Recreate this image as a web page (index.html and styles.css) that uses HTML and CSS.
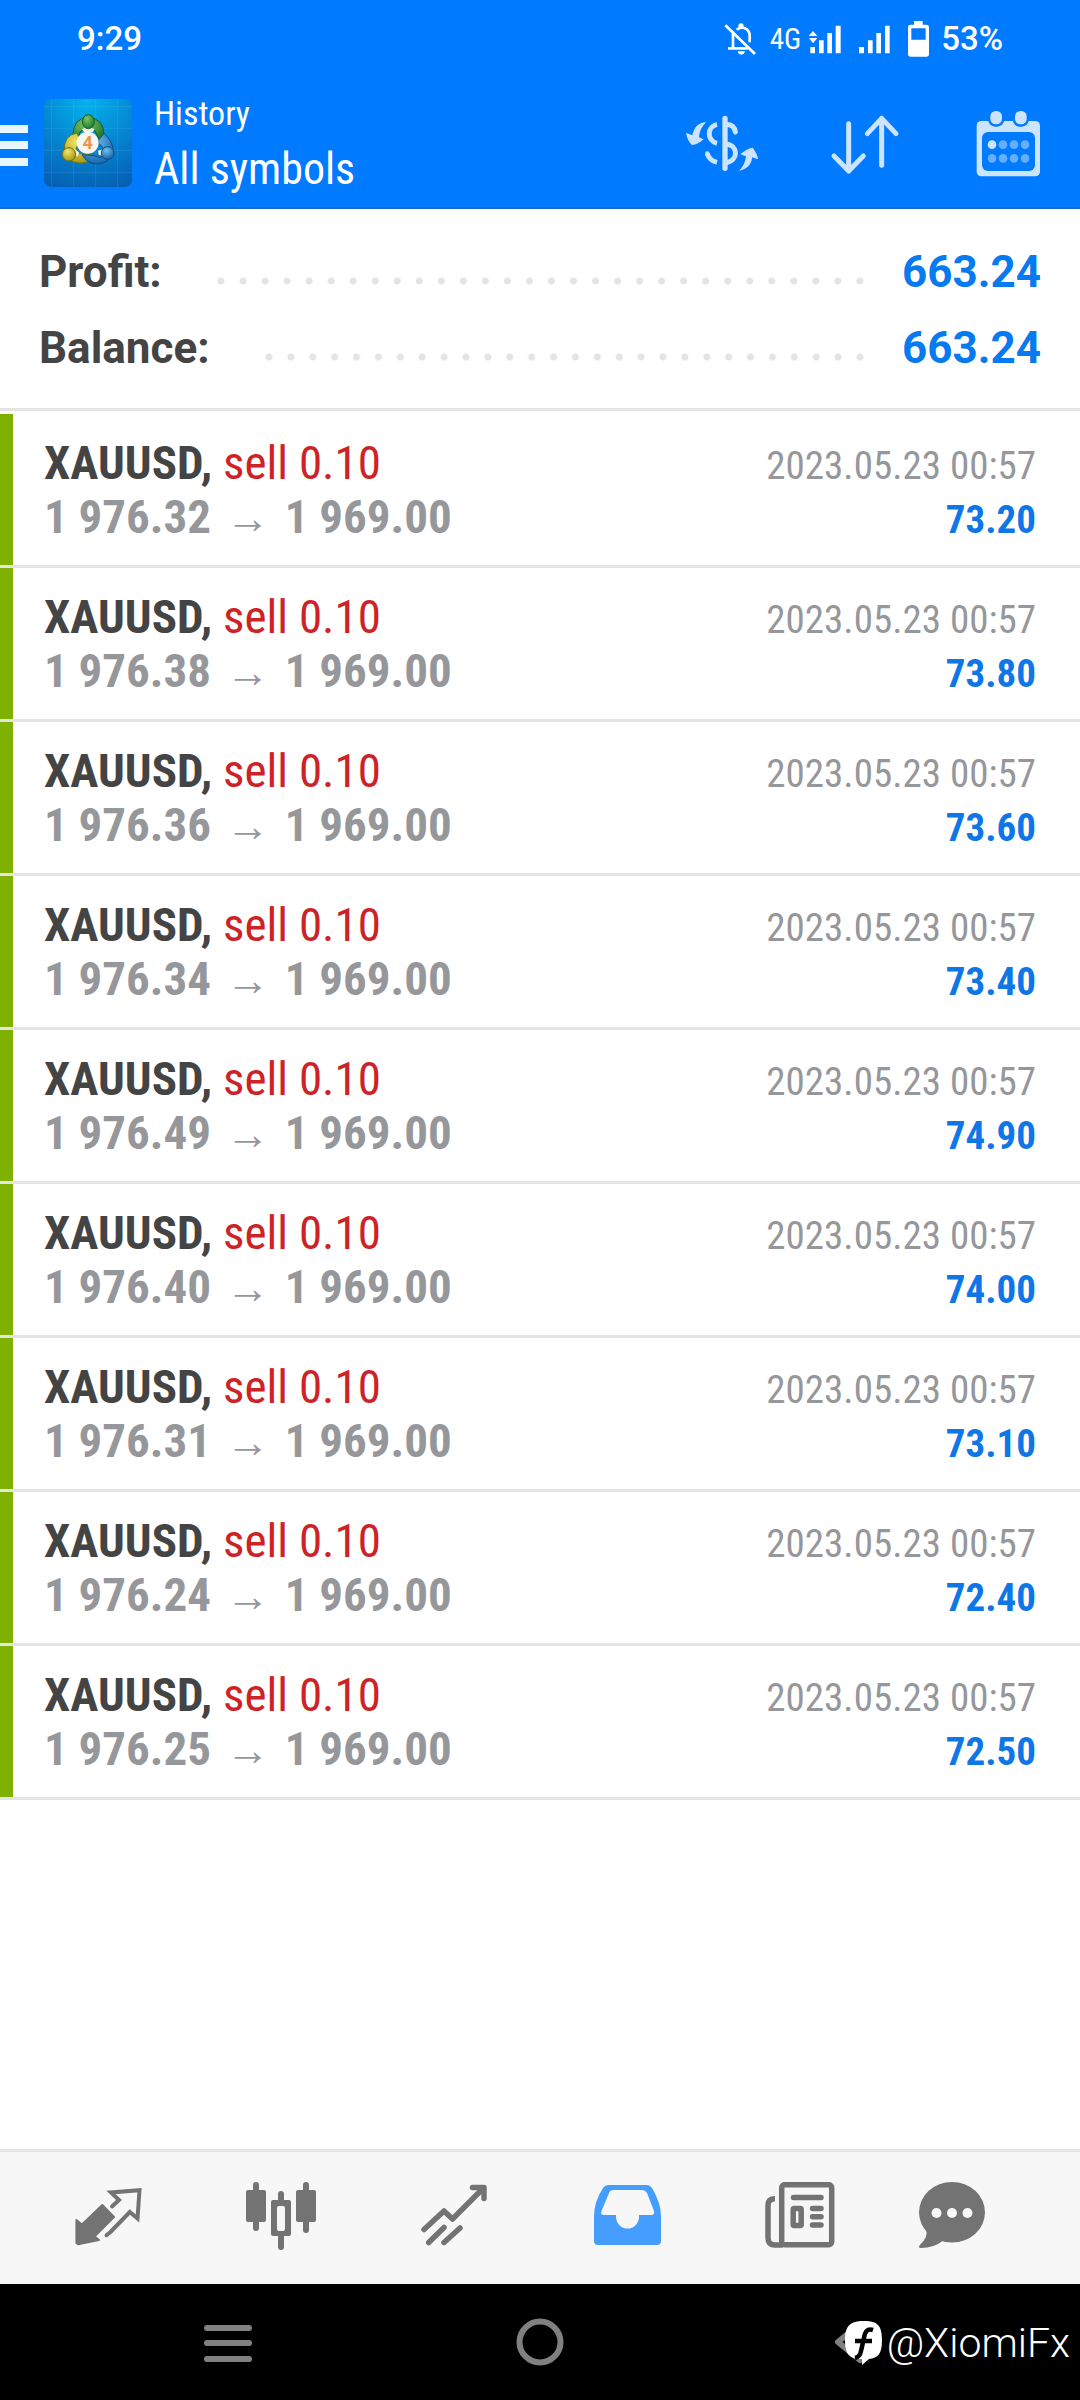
FILE: index.html
```html
<!DOCTYPE html>
<html lang="en">
<head>
<meta charset="utf-8">
<meta name="viewport" content="width=device-width, initial-scale=1">
<title>History</title>
<link rel="stylesheet" href="styles.css">
</head>
<body>
<header class="top">
  <div class="status">
    <span class="clock">9:29</span>
    <svg class="bell" viewBox="195 66 96 96" width="32" height="32" fill="none" stroke="#fff" stroke-width="8" aria-hidden="true">
      <path d="M199 73L288 159"/><path d="M222 92V142M207 142H266M233 86Q243 78 256 81Q272 87 272 104V124"/>
      <circle cx="246" cy="75" r="8" fill="#fff" stroke="none"/><path d="M236 151H258Q256 161 247 161Q238 161 236 151Z" fill="#fff" stroke="none"/>
    </svg>
    <span class="net">4G</span>
    <svg class="signal" viewBox="450 66 96 96" width="32" height="32" fill="#fff" aria-hidden="true">
      <path d="M454 138h14v19h-14zM480 118h14v39h-14zM505 96h14v61h-14zM530 74h15v83h-15zM462 90l13 15h-26zM450 111h25l-13 16z"/>
    </svg>
    <svg class="signal2" viewBox="600 66 96 96" width="32" height="32" fill="#fff" aria-hidden="true">
      <path d="M600 138h15v19h-15zM627 118h14v39h-14zM652 96h14v61h-14zM678 74h14v83h-14z"/>
    </svg>
    <svg class="battery" viewBox="747 61 63 108" width="21" height="36" aria-hidden="true">
      <path fill="#fff" fill-rule="evenodd" d="M765 61h26v11h11q8 0 8 8v80q0 8-8 8h-47q-8 0-8-8V80q0-8 8-8h10zM757 83v34h43V83z"/>
    </svg>
    <span class="percent">53%</span>
  </div>
  <div class="appbar">
    <button class="menu" aria-label="Menu"><i></i><i></i><i></i></button>
    <svg class="logo" viewBox="42 27 264 264" width="88" height="88" aria-hidden="true">
      <defs>
        <radialGradient id="sky" cx=".5" cy="0" r="1.05"><stop offset="0" stop-color="#04b4ee"/><stop offset=".5" stop-color="#0588d2"/><stop offset="1" stop-color="#0560b4"/></radialGradient>
        <radialGradient id="gr" cx=".4" cy=".3" r=".7"><stop offset="0" stop-color="#7cc468"/><stop offset="1" stop-color="#1c7a2a"/></radialGradient>
        <radialGradient id="ye" cx=".4" cy=".3" r=".7"><stop offset="0" stop-color="#f0e66a"/><stop offset="1" stop-color="#a89a14"/></radialGradient>
        <radialGradient id="bl" cx=".4" cy=".3" r=".7"><stop offset="0" stop-color="#74bfee"/><stop offset="1" stop-color="#1668ac"/></radialGradient>
      </defs>
      <rect x="42" y="27" width="264" height="264" rx="20" fill="url(#sky)"/>
      <path d="M65 27V291M131 27V291M197 27V291M263 27V291M42 50H306M42 115H306M42 181H306M42 247H306" stroke="#7fd4ff" stroke-opacity=".22" stroke-width="2"/>
      <g stroke-width="3">
        <path d="M129 138Q128 84 175 82Q222 86 222 134Q219 146 209 154L194 120Q175 104 150 126L146 143Z" fill="url(#gr)" stroke="#17602c"/>
        <path d="M140 129Q100 136 103 184L118 210Q152 228 178 212L198 198L160 190L135 190Q138 168 152 150Z" fill="url(#ye)" stroke="#6e7018"/>
        <path d="M206 150L222 130Q250 154 250 188Q238 220 202 222Q172 222 156 194L188 196L212 204L222 182Q216 166 206 160Z" fill="url(#bl)" stroke="#0d4c86"/>
        <path d="M156 118Q175 102 194 118L188 126H162ZM134 176L148 188L142 200L130 190ZM204 182L220 178L218 198L206 194Z" fill="#eef4d8"/>
        <ellipse cx="175" cy="95" rx="18" ry="21" fill="url(#gr)" stroke="#17602c"/>
        <circle cx="117" cy="193" r="20" fill="url(#ye)" stroke="#6e7018"/>
        <circle cx="233" cy="189" r="19" fill="url(#bl)" stroke="#0d4c86"/>
      </g>
      <circle cx="173" cy="158" r="33" fill="#f6f6f4"/>
      <text x="173" y="178" text-anchor="middle" class="logo-num">4</text>
    </svg>
    <div class="titles"><h2>History</h2><h1>All symbols</h1></div>
    <div class="actions">
      <button aria-label="Symbols"><svg viewBox="78 315 216 216" fill="#cce4ff" aria-hidden="true">
        <path d="M138 361C115 362 102 376 97 400L78 392Q82 416 96 429Q114 428 131 412L117 406C119 388 125 374 138 361Z"/>
        <path d="M237 507C262 500 273 490 277 466L294 472Q292 455 278 437Q258 440 241 457L258 463C256 480 250 494 237 507Z"/>
        <rect x="187" y="341" width="16" height="166" rx="8"/>
        <g fill="none" stroke="#cce4ff" stroke-width="15"><path d="M171 367C140 374 140 416 171 424M198 367Q224 368 226 391M198 426C236 430 236 476 198 482M171 481Q149 476 142 455"/></g>
        <circle cx="226" cy="391" r="7"/><circle cx="142" cy="455" r="7"/>
      </svg></button>
      <button aria-label="Sort"><svg viewBox="507 315 216 216" fill="none" stroke="#cce4ff" stroke-width="15" stroke-linecap="round" stroke-linejoin="round" aria-hidden="true">
        <path d="M566 365V507M522 462L566 507L610 462M665 490V349M622 395L665 349L708 395"/>
      </svg></button>
      <button aria-label="Period"><svg viewBox="936 315 216 216" fill="#cce4ff" aria-hidden="true">
        <rect x="950" y="357" width="190" height="166" rx="14"/>
        <g fill="#007aff"><rect x="966" y="390" width="159" height="117" rx="18"/><rect x="984" y="319" width="49" height="55" rx="22"/><rect x="1058" y="319" width="49" height="55" rx="22"/></g>
        <rect x="991" y="327" width="35" height="40" rx="16"/><rect x="1065" y="327" width="35" height="40" rx="16"/>
        <circle cx="996" cy="428" r="13"/>
        <g fill="#66afff"><circle cx="1029" cy="428" r="13"/><circle cx="1062" cy="428" r="13"/><circle cx="1095" cy="428" r="13"/><circle cx="996" cy="469" r="13"/><circle cx="1029" cy="469" r="13"/><circle cx="1062" cy="469" r="13"/><circle cx="1095" cy="469" r="13"/></g>
      </svg></button>
    </div>
  </div>
</header>
<main>
  <dl class="summary">
    <div><dt>Profit:</dt><dd>663.24</dd></div>
    <div><dt>Balance:</dt><dd>663.24</dd></div>
  </dl>
  <ul class="deals">
    <li><div class="deal"><p><b>XAUUSD,</b> <span class="side">sell 0.10</span></p><time>2023.05.23 00:57</time><p class="price">1 976.32 <span class="arrow">→</span> 1 969.00</p><span class="gain">73.20</span></div></li>
    <li><div class="deal"><p><b>XAUUSD,</b> <span class="side">sell 0.10</span></p><time>2023.05.23 00:57</time><p class="price">1 976.38 <span class="arrow">→</span> 1 969.00</p><span class="gain">73.80</span></div></li>
    <li><div class="deal"><p><b>XAUUSD,</b> <span class="side">sell 0.10</span></p><time>2023.05.23 00:57</time><p class="price">1 976.36 <span class="arrow">→</span> 1 969.00</p><span class="gain">73.60</span></div></li>
    <li><div class="deal"><p><b>XAUUSD,</b> <span class="side">sell 0.10</span></p><time>2023.05.23 00:57</time><p class="price">1 976.34 <span class="arrow">→</span> 1 969.00</p><span class="gain">73.40</span></div></li>
    <li><div class="deal"><p><b>XAUUSD,</b> <span class="side">sell 0.10</span></p><time>2023.05.23 00:57</time><p class="price">1 976.49 <span class="arrow">→</span> 1 969.00</p><span class="gain">74.90</span></div></li>
    <li><div class="deal"><p><b>XAUUSD,</b> <span class="side">sell 0.10</span></p><time>2023.05.23 00:57</time><p class="price">1 976.40 <span class="arrow">→</span> 1 969.00</p><span class="gain">74.00</span></div></li>
    <li><div class="deal"><p><b>XAUUSD,</b> <span class="side">sell 0.10</span></p><time>2023.05.23 00:57</time><p class="price">1 976.31 <span class="arrow">→</span> 1 969.00</p><span class="gain">73.10</span></div></li>
    <li><div class="deal"><p><b>XAUUSD,</b> <span class="side">sell 0.10</span></p><time>2023.05.23 00:57</time><p class="price">1 976.24 <span class="arrow">→</span> 1 969.00</p><span class="gain">72.40</span></div></li>
    <li><div class="deal"><p><b>XAUUSD,</b> <span class="side">sell 0.10</span></p><time>2023.05.23 00:57</time><p class="price">1 976.25 <span class="arrow">→</span> 1 969.00</p><span class="gain">72.50</span></div></li>
  </ul>
</main>
<nav class="tabs">
  <button aria-label="Quotes"><svg viewBox="0 0 72 72" aria-hidden="true"><path fill="#737373" stroke="#737373" stroke-width="2" stroke-linejoin="round" d="M4.400 38L10 42.500L30.300 23L42 35L22.500 54.500L27 58L6 62.300L4.400 61Z"/><path fill="none" stroke="#737373" stroke-width="4" stroke-linecap="round" d="M40 24.500L47 18L39 10.500L67.500 8.200L65.500 36.500L57.800 30L38.500 50L34.500 53.200"/></svg></button>
  <button aria-label="Charts"><svg viewBox="0 0 72 72" fill="#737373" aria-hidden="true"><rect x="1" y="8" width="20" height="32" rx="2"/><rect x="8" y="0" width="6" height="49" rx="3"/><rect x="51" y="8" width="20" height="32" rx="2"/><rect x="58" y="0" width="6" height="51" rx="3"/><rect x="33" y="9" width="6" height="14" rx="3"/><rect x="33" y="50" width="6" height="18" rx="3"/><path fill-rule="evenodd" d="M28 18H44Q46 18 46 20V52Q46 54 44 54H28Q26 54 26 52V20Q26 18 28 18ZM34 24Q32 24 32 26V47Q32 49 34 49H38Q40 49 40 47V26Q40 24 38 24Z"/></svg></button>
  <button aria-label="Trade"><svg viewBox="0 0 72 72" fill="none" stroke="#737373" stroke-width="5.500" stroke-linecap="round" stroke-linejoin="round" aria-hidden="true"><path d="M6 47.500L26 29L34.500 37L65 6.500M54.500 5.500H66V16.500M10.700 60.500L26 45.500M26 60.500L42 46"/></svg></button>
  <button aria-label="History" aria-current="page"><svg viewBox="0 0 72 72" fill="#459dff" aria-hidden="true"><path fill-rule="evenodd" d="M18 3H56Q59 3 61 6Q70 21 70 34V59Q70 63 66 63H7Q3 63 3 59V34Q3 20 12 6Q14 3 18 3ZM22 8Q19 8 18 11L10.500 29Q9 33 13 33H25V35A11.500 11.500 0 0 0 48 35V33H60Q64 33 63 29L56 11Q54 8 51 8Z"/></svg></button>
  <button aria-label="News"><svg viewBox="0 0 72 72" fill="none" stroke="#737373" stroke-width="5.500" aria-hidden="true"><rect x="17.700" y="2.700" width="50" height="60" rx="3"/><path d="M11 16.700Q4 16.700 4 23V56Q4 63 11 63H19"/><path stroke-linecap="round" d="M29.500 15.500H57M48.500 26.500H57M48.500 34.700H57M48.500 43H57"/><rect x="29.200" y="26.400" width="8" height="17" rx="1"/></svg></button>
  <button aria-label="Messages"><svg viewBox="0 0 72 72" fill="#737373" aria-hidden="true"><ellipse cx="36" cy="30.300" rx="33" ry="30.300"/><path d="M10 48Q13 54 3.500 63.500Q2 66 5 66Q18 66 28 58Z"/><g fill="#f7f7f7"><circle cx="20.500" cy="31" r="5"/><circle cx="36" cy="31" r="5"/><circle cx="51.500" cy="31" r="5"/></g></svg></button>
</nav>
<footer class="sysnav">
  <button aria-label="Recent apps"><svg viewBox="0 0 48 48" fill="#808080" aria-hidden="true"><rect y="7" width="48" height="6" rx="3"/><rect y="22" width="48" height="6" rx="3"/><rect y="38" width="48" height="6" rx="3"/></svg></button>
  <button aria-label="Home"><svg viewBox="0 0 48 48" fill="none" stroke="#808080" stroke-width="6" aria-hidden="true"><circle cx="24" cy="24" r="20.500"/></svg></button>
  <button aria-label="Back"><svg viewBox="0 0 48 48" fill="none" stroke="#808080" stroke-width="6" stroke-linecap="round" stroke-linejoin="round" aria-hidden="true"><path d="M32 6L10 24L32 42Z"/></svg></button>
  <div class="mark">
    <svg viewBox="0 0 38 44" width="38" height="44" aria-hidden="true"><path fill="#fff" d="M19 0C33 0 37 5 37 19C37 33 33 37 24 38L17 44V38C4 38 0 33 0 19C0 5 5 0 19 0Z"/><path fill="none" stroke="#000" stroke-width="4.500" d="M28 9C22 7 20 11 19 17L16 30Q15 36 10 37M10 20H27"/></svg>
    <span>@XiomiFx</span>
  </div>
</footer>
</body>
</html>
```
FILE: styles.css
```css
* { box-sizing: border-box; margin: 0; padding: 0; }
body {
  min-height: 100vh;
  display: flex;
  flex-direction: column;
  background: #fff;
  color: #444;
  font-family: "Roboto Condensed", "Liberation Sans Narrow", Roboto, sans-serif;
}
button { border: 0; background: none; font: inherit; display: grid; place-items: center; }
ul { list-style: none; }

.top { background: #007aff; color: #fff; border-bottom: 2px solid #1a6dc4; }
.status { display: flex; align-items: center; height: 78px; padding: 0 77px; font-family: Roboto, sans-serif; }
.clock, .percent { font-size: 33px; font-weight: 500; line-height: 40px; }
.bell { margin-left: auto; }
.net { margin: 0 8px 0 14px; font-family: "Roboto Condensed", Roboto, sans-serif; font-size: 29px; }
.signal2 { margin-left: 18px; }
.battery { margin: 0 12px 0 17px; }

.appbar { display: flex; align-items: center; height: 129px; padding-right: 36px; }
.menu { width: 28px; height: 41px; margin-top: 5px; align-content: space-between; }
.menu i { width: 100%; height: 8px; background: #e8f6ff; }
.logo { margin: 0 22px 0 16px; }
.logo-num { font: 700 54px Roboto, sans-serif; fill: #f0964a; }
.titles { padding-top: 4px; }
.titles h1, .titles h2 { font-weight: 400; }
.titles h2 { font-size: 34px; line-height: 48px; }
.titles h1 { font-size: 44px; line-height: 64px; }
.actions { display: flex; gap: 71px; margin-left: auto; }
.actions svg, .tabs svg { display: block; width: 72px; height: 72px; }

.summary { padding: 25px 39px 22px; border-bottom: 3px solid #e4e4e4; margin-bottom: 3px; font: 700 44px/76px Roboto, sans-serif; }
.summary div { display: flex; }
.summary dd { color: #077af0; }
/* dotted leader between label and value */
.summary dt { flex: 1; display: flex; }
.summary dt::after {
  content: "";
  flex: 1;
  margin: 0 31px 0 48px;
  background: radial-gradient(circle at 50% 47px, #e4e4e4 3px, transparent 4px) 0 0 / 22px 76px round;
}

.deals li { border-bottom: 3px solid #e4e4e4; }
.deal {
  display: grid;
  grid-template-columns: 1fr auto;
  align-items: baseline;
  padding: 22px 44px 21px 31px;
  border-left: 13px solid #80b000;
  font-size: 47px;
  line-height: 54px;
}
.side { color: #cd2326; }
.deal time, .gain { font-size: 39px; line-height: 48px; }
.deal time { color: #96979b; }
.price { font-weight: 700; color: #96979b; }
.arrow { margin: 0 4px; font-weight: 400; font-size: 44px; line-height: 1px; }
.gain { font-weight: 700; color: #0e76e6; text-align: right; }

.tabs {
  display: grid;
  grid-template-columns: repeat(5, 173fr) 131fr;
  align-items: center;
  height: 135px;
  margin-top: auto;
  padding: 0 63px 0 21px;
  background: #f7f7f7;
  border-top: 3px solid #e4e4e4;
}
main { flex: 1; }
.sysnav {
  position: relative;
  display: grid;
  grid-template-columns: repeat(3, 1fr);
  align-items: center;
  height: 116px;
  padding: 0 72px;
  background: #000;
}
.sysnav button svg { display: block; width: 48px; height: 48px; }
.mark { position: absolute; right: 10px; top: 35px; display: flex; align-items: center; gap: 4px; color: #fff; font: 300 41px/48px Roboto, sans-serif; }
```
